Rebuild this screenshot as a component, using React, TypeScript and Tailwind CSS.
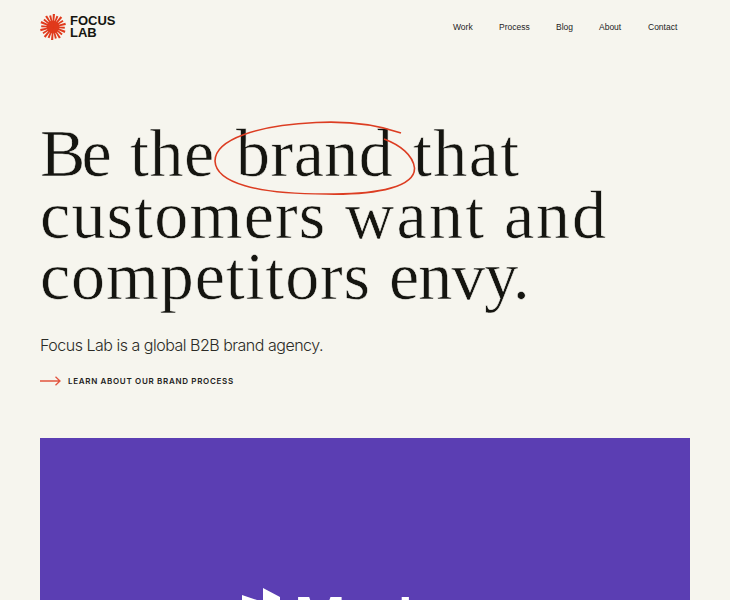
import React from "react";

const rays = Array.from({ length: 20 }, (_, i) => i * 18 + 4);

function Logo() {
  return (
    <a className="flex items-center gap-[4px] text-[#151510]">
      <svg width="26" height="26" viewBox="-13 -13 26 26">
        <circle r="6.5" fill="#e03a1c" />
        {rays.map((a, i) => (
          <path key={a} d={i % 2 ? "M-.6 0L-1 -11.8L1 -11.8L.6 0Z" : "M-.6 0L-1.1 -13L1.1 -13L.6 0Z"} transform={`rotate(${a})`} fill="#e03a1c" />
        ))}
      </svg>
      <span className="font-['Liberation_Sans',sans-serif] text-[13px] font-bold leading-[12px]">
        FOCUS
        <br />
        LAB
      </span>
    </a>
  );
}

function Nav() {
  return (
    <nav className="flex font-['Liberation_Sans',sans-serif] text-[8.5px] leading-[12px] text-[#22221d]">
      <a className="w-[46px]">Work</a>
      <a className="w-[57px]">Process</a>
      <a className="w-[43px]">Blog</a>
      <a className="w-[49px]">About</a>
      <a className="w-[42px]">Contact</a>
    </nav>
  );
}

function Circle() {
  return (
    <svg className="absolute left-[-23.5px] top-[-4px]" width="204" height="78" viewBox="212 119 204 78" fill="none" stroke="#dc3d22" strokeWidth="1.6">
      <path d="M400 133C374 124 344 121 315 122.5C258 125 214 139 214 161C215 183 256 194 325 194C379 195 414 186 413.500 168C412 155 399 145 383 139" />
    </svg>
  );
}

export default function App() {
  return (
    <div className="flex h-[600px] w-[730px] flex-col overflow-hidden bg-[#f6f5ee] px-10 font-['Inter','Liberation_Sans',sans-serif]">
      <header className="flex h-[54px] shrink-0 items-center justify-between">
        <Logo />
        <Nav />
      </header>
      <h1 className="mt-[69px] flex shrink-0 flex-col whitespace-nowrap font-['Liberation_Serif',serif] text-[68px] font-normal leading-[61.5px] text-[#151510] [-webkit-text-stroke:0.55px_#f6f5ee]">
        <span className="flex">
          <span className="w-[90px] tracking-[-3.8px]">Be</span>
          <span className="w-[106px] tracking-[0.5px]">the</span>
          <span className="relative w-[177px] tracking-[0.5px]">
            brand
            <Circle />
          </span>
          <span className="tracking-[1.4px]">that</span>
        </span>
        <span className="flex">
          <span className="w-[305px] tracking-[1.2px]">customers</span>
          <span className="w-[159px] tracking-[2.3px]">want</span>
          <span className="tracking-[1.9px]">and</span>
        </span>
        <span className="flex">
          <span className="w-[349px] tracking-[0.9px]">competitors</span>
          <span className="tracking-[-1px]">envy.</span>
        </span>
      </h1>
      <p className="mt-[25px] shrink-0 whitespace-nowrap text-[16px] font-light leading-6 tracking-[-0.49px] text-[#2b2b26]">
        Focus Lab is a global B2B brand agency.
      </p>
      <a className="mt-[16px] flex h-4 shrink-0 items-center gap-[7px] text-[8px] font-semibold tracking-[0.68px] text-[#22221d]">
        <svg width="21" height="10" viewBox="0 0 21 10" fill="none" stroke="#e2543e" strokeWidth="1.3">
          <path d="M0 5H20M15.500 .8L20 5L15.500 9.200" />
        </svg>
        LEARN ABOUT OUR BRAND PROCESS
      </a>
      <section className="mt-[49px] h-[162px] shrink-0 overflow-hidden bg-[#5b3eb3] text-white">
        <div className="flex pl-[201px] pt-[150px]">
          <svg className="shrink-0" width="40" height="48" viewBox="0 0 40 48" fill="white">
            <path d="M1 7L16 12V48H1ZM22 0L39 9V48H22Z" />
          </svg>
          <span className="ml-[13px] text-[56px] font-semibold leading-[60px] tracking-[-1px]">Mark</span>
        </div>
      </section>
    </div>
  );
}
